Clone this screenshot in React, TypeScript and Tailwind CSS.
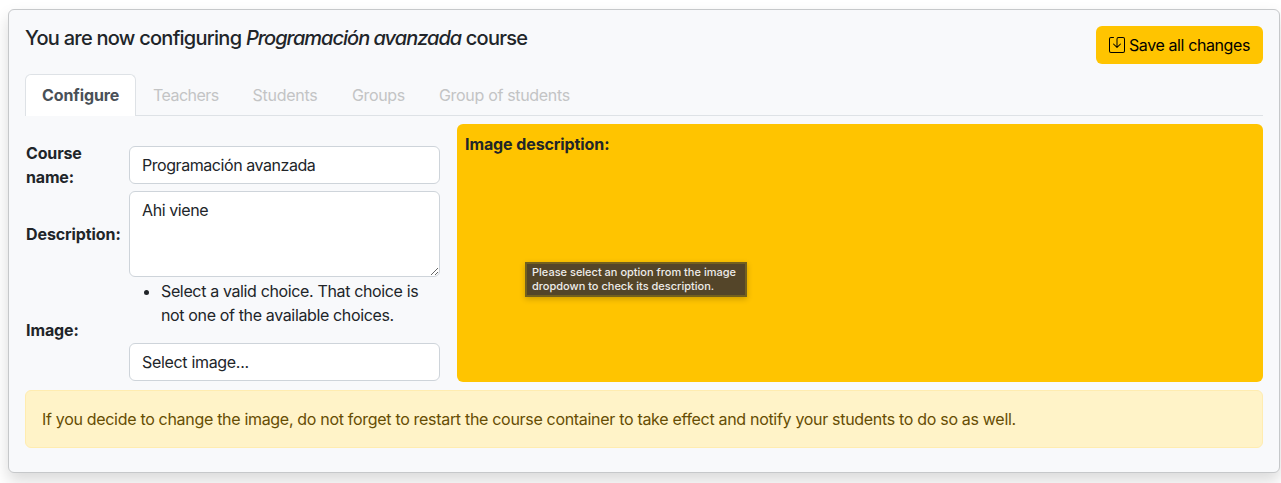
import { BsSave } from "react-icons/bs";

const tabs = [
  { label: "Teachers", cls: "w-[99.5px] tracking-[-0.52px]" },
  { label: "Students", cls: "w-[99.5px] tracking-[-0.26px]" },
  { label: "Groups", cls: "w-[87px] tracking-[-0.36px]" },
  { label: "Group of students", cls: "w-[165px] tracking-[-0.32px]" },
];

const field =
  "block w-[311px] rounded-md border border-[#ced4da] bg-white px-3 text-[#212529]";

export default function App() {
  return (
    <div className="h-[483px] overflow-hidden bg-white pl-2 pt-[9px] font-['Inter',sans-serif] text-base leading-6 tracking-[-0.32px] text-[#212529]">
      <main className="h-[464px] w-[1272px] rounded-md border border-[#c6c8ca] bg-[#f8f9fb] px-4 pt-4 shadow-[0_8px_16px_rgba(0,0,0,0.15)]">
        <header className="flex h-12 items-start justify-between">
          <h1 className="whitespace-nowrap text-xl font-medium leading-6 tracking-[-0.74px]">
            You are now configuring <em className="tracking-[-1px]">Programación avanzada</em> course
          </h1>
          <button className="flex h-[38px] w-[167px] items-center gap-1 whitespace-nowrap rounded-md bg-[#ffc400] pl-[13px] tracking-[-0.4px] text-black">
            <BsSave className="size-4 shrink-0" />
            <span>Save all changes</span>
          </button>
        </header>

        <nav className="flex h-[42px] border-b border-[#dee2e6]">
          <span className="h-[42px] w-[111px] whitespace-nowrap rounded-t-md border border-b-0 border-[#dee2e6] bg-white pl-4 pt-2 font-bold tracking-[-0.1px] text-[#495057]">
            Configure
          </span>
          {tabs.map((t) => (
            <span
              key={t.label}
              className={`${t.cls} whitespace-nowrap pl-[17px] pt-[9px] text-[#c3c4c5]`}
            >
              {t.label}
            </span>
          ))}
        </nav>

        <div className="flex gap-4 pt-2">
          <section className="grid w-[416px] grid-cols-[104px_312px] grid-rows-[64px_90px_104px]">
            <label className="self-center whitespace-nowrap pl-px pt-[17px] font-bold tracking-[-0.16px]">
              Course
              <br />
              name:
            </label>
            <div className="pt-[22px]">
              <div className={`${field} h-[38px] pt-[6px] tracking-[-0.44px]`}>
                Programación avanzada
              </div>
            </div>
            <label className="self-center whitespace-nowrap pl-px pt-[2px] font-bold tracking-[-0.1px]">
              Description:
            </label>
            <div className="pt-[3px]">
              <textarea
                className={`${field} h-[86px] resize py-[6px] tracking-[-0.4px]`}
                defaultValue="Ahi viene"
              />
            </div>
            <label className="self-center whitespace-nowrap pl-px font-bold tracking-[-0.1px]">
              Image:
            </label>
            <div className="pt-[1px]">
              <ul className="mb-4 list-disc whitespace-nowrap pl-8 tracking-[-0.36px]">
                <li>
                  Select a valid choice. That choice is
                  <br />
                  not one of the available choices.
                </li>
              </ul>
              <div className={`${field} h-[38px] pt-[6px]`}>Select image...</div>
            </div>
          </section>
          <section className="relative h-[258px] w-[806px] rounded-md bg-[#ffc400] pl-2 pt-2">
            <h2 className="font-bold tracking-[-0.1px]">Image description:</h2>
            <div className="absolute left-[68px] top-[138px] h-[35px] w-[222px] whitespace-nowrap border-2 border-[#73601f] bg-[#544529] pl-[5px] pt-[1px] text-[11px] font-medium leading-[14px] text-[#eeece9] shadow-[0_2px_6px_rgba(0,0,0,0.2)]">
              <span className="tracking-[0px]">
                Please select an option from the image
                <br />
                dropdown to check its description.
              </span>
            </div>
          </section>
        </div>

        <p className="mt-2 h-[58px] whitespace-nowrap rounded-md border border-[#ffecb0] bg-[#fff3c8] px-4 py-4 tracking-[-0.31px] text-[#664d03]">
          If you decide to change the image, do not forget to restart the course container to take
          effect and notify your students to do so as well.
        </p>
      </main>
    </div>
  );
}
